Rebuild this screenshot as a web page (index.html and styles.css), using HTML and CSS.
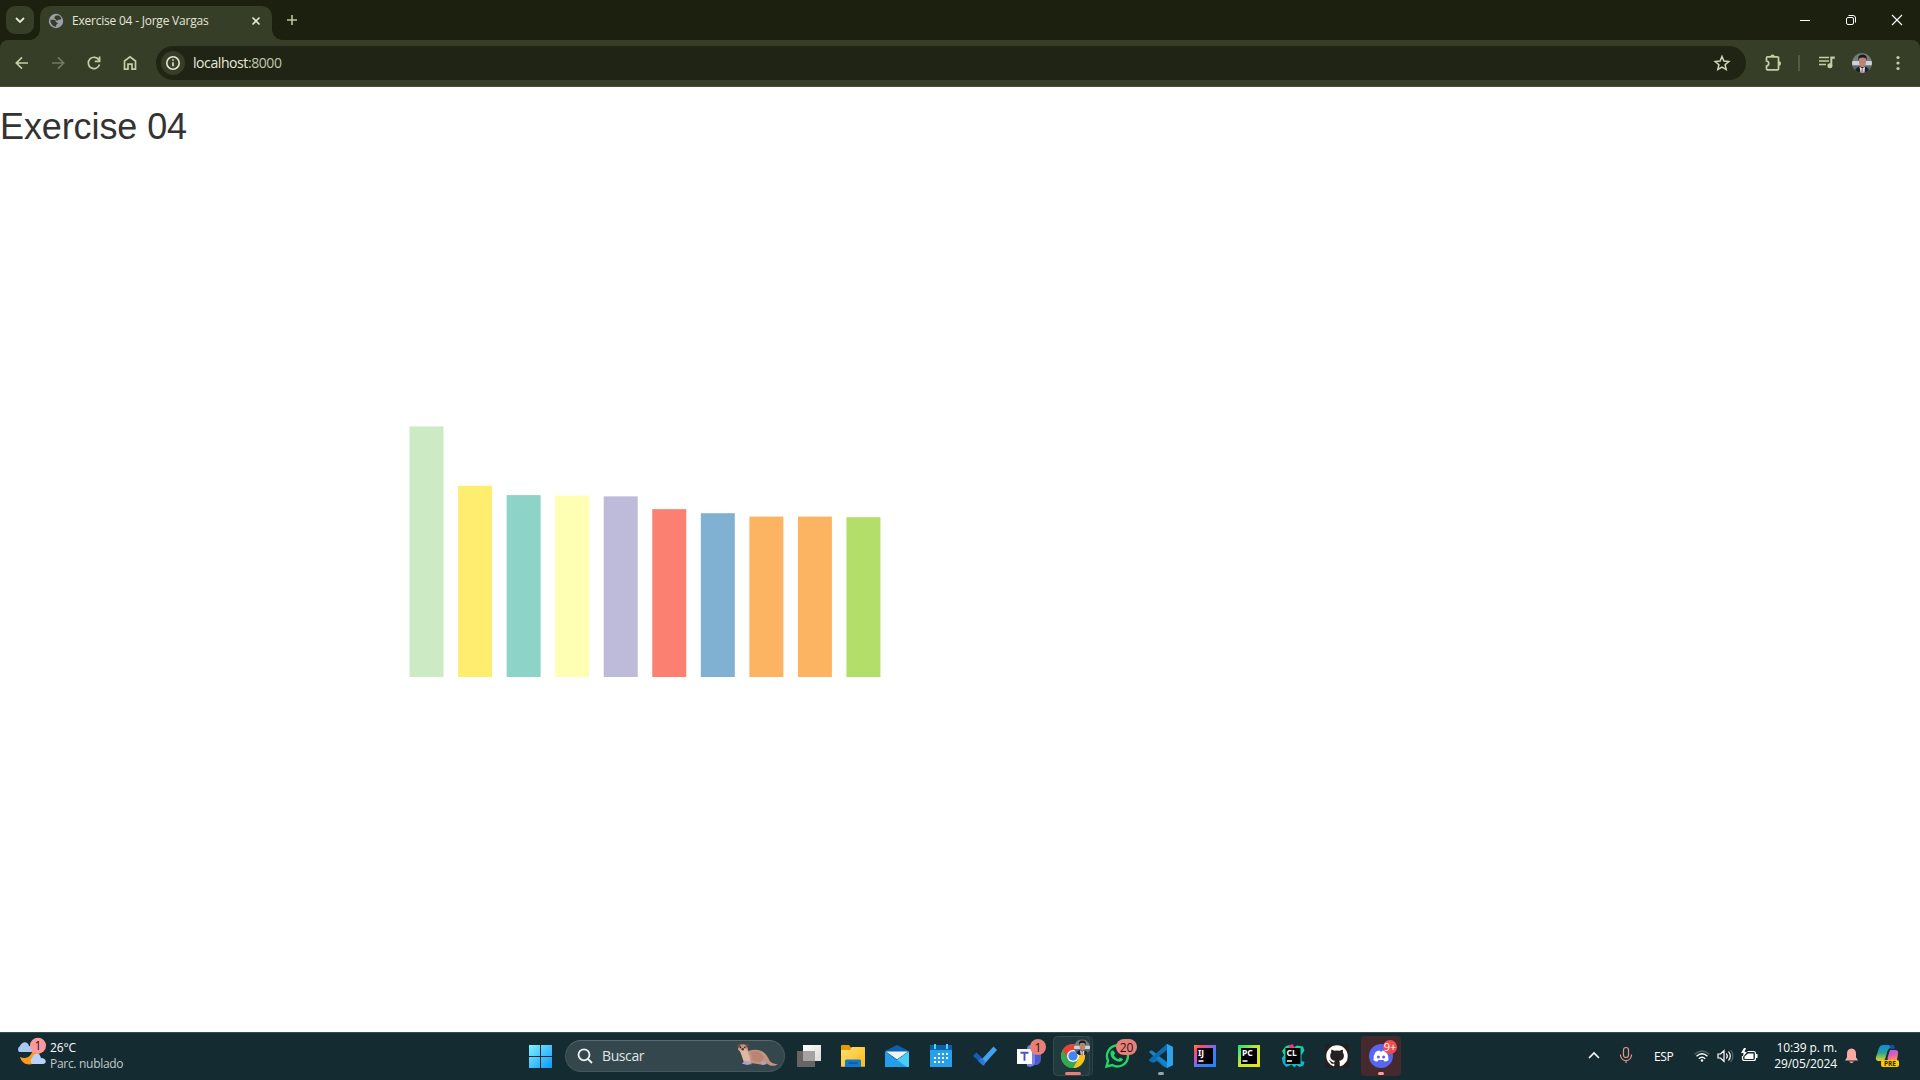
FILE: index.html
```html
<!DOCTYPE html>
<html lang="es">
<head>
<meta charset="utf-8">
<title>Exercise 04 - Jorge Vargas</title>
<link rel="stylesheet" href="styles.css">
</head>
<body>
<div class="screen">
  <header class="tabstrip">
    <div class="tab-search"><svg width="28" height="28"><path d="M10 12l4 4 4-4" fill="none" stroke="#e3e6d8" stroke-width="1.8"/></svg></div>
    <div class="tab">
      <svg class="globe" width="16" height="16" viewBox="0 0 16 16"><circle cx="8" cy="8" r="7.200" fill="#9aa0a6"/><path d="M2.500 6.800h3.200c1.600 0 2 1 2 1.600 0 1.200 2.100.8 2.100 2 0 .9-1.700.7-1.700 1.800v1.500C5 13.800 2 10.500 2.500 6.800zM8 2.500h2.500c1.500.7 2.500 1.700 2.900 3.200-1 1-1.600 1.300-2.600 1-.9-.3-.8 1.200-2.200.9-1-.3-.3-1.400-1.500-1.700-1.400-.3-.5-2.500.9-3.400z" fill="#373e28"/></svg>
      <span class="tab-title">Exercise 04 - Jorge Vargas</span>
      <svg width="16" height="16"><path d="M4.500 4.500l7 7m0-7l-7 7" stroke="#e3e6d8" stroke-width="1.600"/></svg>
    </div>
    <svg class="new-tab" width="20" height="20"><path d="M10 5v10M5 10h10" stroke="#bcc5a5" stroke-width="1.600"/></svg>
    <div class="window-buttons">
      <svg width="46" height="40"><path d="M18 20.500h10" stroke="#fff"/></svg>
      <svg width="46" height="40" fill="none" stroke="#fff"><rect x="18.500" y="17.500" width="7" height="7" rx="1.500"/><path d="M20.500 15.500h4.500q2.500 0 2.500 2.500v4.500"/></svg>
      <svg width="46" height="40"><path d="M18 15l10 10m0-10l-10 10" stroke="#fff" stroke-width="1.100"/></svg>
    </div>
  </header>
  <div class="toolbar-wrap">
  <nav class="toolbar">
    <div class="nav-buttons">
      <svg width="36" height="36" fill="none" stroke="#c5cda9" stroke-width="1.700"><path d="M24 18H12.500M18 12.300L12.300 18l5.700 5.700"/></svg>
      <svg width="36" height="36" fill="none" stroke="#737961" stroke-width="1.700"><path d="M12 18h11.500M18 12.300l5.700 5.700-5.700 5.700"/></svg>
      <svg width="36" height="36" fill="none" stroke="#c5cda9" stroke-width="1.700"><path d="M23 15.200A5.700 5.700 0 1 0 23.500 19.500M23.600 11.500v4.800h-4.800"/></svg>
      <svg width="36" height="36" fill="none" stroke="#c5cda9" stroke-width="1.700"><path d="M12.500 24.200V16L18 11.800 23.500 16v8.200H20v-5h-4v5z"/></svg>
    </div>
    <div class="address">
      <span class="site-info"><svg width="24" height="24" fill="none" stroke="#e3e6d8" stroke-width="1.600"><circle cx="12" cy="12" r="6.200"/><path d="M12 11.200v4M12 8.200v1.600"/></svg></span>
      <span class="url">localhost<span class="port">:8000</span></span>
      <svg class="star" width="18" height="18" fill="none" stroke="#d0d6ba" stroke-width="1.500"><path d="M9 2.500l1.900 4.600 4.900.4-3.700 3.200 1.100 4.800L9 13l-4.200 2.500 1.100-4.800-3.700-3.200 4.900-.4z"/></svg>
    </div>
    <div class="tool-icons">
      <svg width="20" height="20" fill="none" stroke="#c5cda9" stroke-width="1.700"><path d="M4.500 3.800h10q1 0 1 1v11q0 1-1 1h-10q-1 0-1-1V13c3-.5 3-4.500 0-5V4.800q0-1 1-1z"/><path d="M8.200 3.500a1.300 1.100 0 0 1 2.600 0M16 9a1.200 1.500 0 0 1 0 3" fill="#c5cda9"/></svg>
      <span class="divider"></span>
      <svg class="media" width="18" height="16"><path d="M1 2.500h10M1 6h10M1 9.500h7" stroke="#c5cda9" stroke-width="1.600"/><path d="M12.300 1.500H16.800v2.200h-2.500v7h-2z" fill="#c5cda9"/><circle cx="11.900" cy="10.800" r="2.500" fill="#c5cda9"/></svg>
      <svg class="profile" width="20" height="20" viewBox="0 0 20 20"><use href="#avatar"/></svg>
      <svg class="menu" width="6" height="16" fill="#c5cda9"><circle cx="3" cy="2.500" r="1.600"/><circle cx="3" cy="8" r="1.600"/><circle cx="3" cy="13.500" r="1.600"/></svg>
    </div>
  </nav>
  </div>
  <main class="page">
    <h1>Exercise 04</h1>
    <svg class="chart" width="500" height="260" viewBox="0 0 500 260">
      <g transform="translate(14.56 0)">
        <rect x="0" y="9.400" width="33.980" height="250.600" fill="#ccebc5"/>
        <rect x="48.540" y="68.750" width="33.980" height="191.250" fill="#ffed6f"/>
        <rect x="97.090" y="78.100" width="33.980" height="181.900" fill="#8dd3c7"/>
        <rect x="145.630" y="78.700" width="33.980" height="181.300" fill="#ffffb3"/>
        <rect x="194.170" y="79.400" width="33.980" height="180.600" fill="#bebada"/>
        <rect x="242.720" y="92.150" width="33.980" height="167.850" fill="#fb8072"/>
        <rect x="291.260" y="96.200" width="33.980" height="163.800" fill="#80b1d3"/>
        <rect x="339.810" y="99.600" width="33.980" height="160.400" fill="#fdb462"/>
        <rect x="388.350" y="99.600" width="33.980" height="160.400" fill="#fdb462"/>
        <rect x="436.890" y="100.200" width="33.980" height="159.800" fill="#b3de69"/>
      </g>
    </svg>
  </main>
  <footer class="taskbar">
    <div class="weather">
      <svg width="32" height="40"><path d="M5 25c7 3 12-1 13-9 6 2 9 7 4 13-6 6-15 4-17-4z" fill="#fb9a1c"/><path d="M18 16l4-5 5 6-2 3z" fill="#fdc43c"/><path d="M4 20a4 4 0 0 1 1-6c2-5 8-5 9 0 6 0 6 6 2 6z" fill="#a9c9f5"/><path d="M17 32a4 4 0 0 1 0-6c2-6 8-5 9 0 6 0 6 6 2 6z" fill="#b9d2fa"/><circle cx="23" cy="13.700" r="8" fill="#ff99a0"/><text x="23" y="18.300" class="badge-text">1</text></svg>
      <div class="weather-text"><span class="degrees">26°C</span><span class="muted">Parc. nublado</span></div>
    </div>
    <div class="apps">
      <svg class="start" width="50" height="48"><defs><linearGradient id="win" x1="14" y1="13" x2="37" y2="36" gradientUnits="userSpaceOnUse"><stop stop-color="#7cf3ff"/><stop offset="1" stop-color="#0f96fb"/></linearGradient></defs><path d="M14 13h11v11H14zM26 13h11v11H26zM14 25h11v11H14zM26 25h11v11H26z" fill="url(#win)"/></svg>
      <div class="search">
        <svg width="16" height="16" fill="none" stroke="#eef2f2" stroke-width="1.800"><circle cx="7" cy="6.800" r="5.500"/><path d="M11 11l4 4"/></svg>
        <span>Buscar</span>
        <svg class="otter" width="44" height="28" viewBox="0 0 44 28"><path d="M4 3.500Q8 1 13 3.500L14.500 9c6-2 12-1.500 16 2 4 3.500 4 7.500 7 9.500 2 1.300 4 1.200 6 1.700-3 2.600-8 1.800-11-1L30 23l-13-2-9 1 2-3-3-9-3-2z" fill="#c39380"/><path d="M5.500 7.500l7-.5 3 7 1 6-7-1z" fill="#dfb8a4"/><path d="M17 10c6-2 11 0 13 6l-3 4-8-1z" fill="#b98471"/><path d="M3 3l2.500-1L7 4 4.500 6zM11.500 2l3 .3-.3 3-2 0z" fill="#76483f"/><circle cx="6.500" cy="5.500" r=".8" fill="#202020"/><circle cx="10.800" cy="5.300" r=".8" fill="#202020"/><circle cx="8.700" cy="7.300" r="1.200" fill="#51312c"/><path d="M8 21.500l4-2.500 4 1 2 2-5 1zM26 20l4-1 3 3-5 1z" fill="#aea1cb"/></svg>
      </div>
      <svg class="app first"><defs><linearGradient id="tv" x2="1" y2="1"><stop stop-color="#fff"/><stop offset="1" stop-color="#dadada"/></linearGradient></defs><path d="M10 19h18v16H10z" fill="#686463"/><path d="M16 13h18v16H16z" fill="url(#tv)"/><path d="M16 19h12v10H16z" fill="#a5a3a2"/></svg>
      <svg class="app"><defs><linearGradient id="fo" x2="1" y2="1"><stop stop-color="#ffe071"/><stop offset="1" stop-color="#fcb918"/></linearGradient></defs><path d="M10 14q0-1 1-1h7l2 2.500h14V25H10z" fill="#e19c03"/><path d="M10 18h9l2-3h12q1 0 1 1v18.700H10z" fill="url(#fo)"/><path d="M14 35v-6q0-1.500 1.500-1.500h13q1.500 0 1.500 1.500v6z" fill="#1278cc"/><path d="M17.500 31h9" stroke="#0a4e8d" stroke-width="1.200"/></svg>
      <svg class="app"><path d="M10 19l12-6 12 6v5H10z" fill="#0a62ad"/><path d="M11 19.500h22l-11 8z" fill="#f2f2f2"/><path d="M10 19.500L22 28l12-8.500V35H10z" fill="#239eea"/><path d="M34 19.500L22 28l10 7h2z" fill="#48cff5"/></svg>
      <svg class="app"><path d="M11 18h22v17H11z" fill="#26a0e8"/><path d="M11 13h22v5H11z" fill="#0a62ad"/><path d="M15 12h2v5h-2zM27 12h2v5h-2z" fill="#4fd2f8"/><path d="M19 22h10M15 26h14M15 30h10" stroke="#fff" stroke-width="2" stroke-dasharray="2 2"/></svg>
      <svg class="app"><path d="M10 24l3.500-3.500 8.500 8.500-.5 5z" fill="#185abd"/><path d="M19 27L30.500 14.500 34 18 20 33.500 16.500 30z" fill="#43a1f0"/><path d="M15 29l3-3 4 3-1.500 4.500z" fill="#2b78d4"/></svg>
      <svg class="app"><circle cx="24" cy="17" r="4" fill="#7b83eb"/><path d="M19 21h15v7q-1 6-7 5-2 3-7 1z" fill="#5059c9"/><path d="M18 21h10v10q-2 5-8 3z" fill="#7b83eb"/><path d="M10 17h15v15H10z" fill="#fff"/><path d="M13.500 20.800h8M17.500 20.800v8" stroke="#4b53bc" stroke-width="1.900"/><circle cx="31" cy="15" r="8" fill="#e88078"/><text x="31" y="19.500" class="badge-text">1</text></svg>
      <svg class="app"><rect x="4.500" y="4.500" width="37" height="39" rx="4" fill="#1a3338" stroke="#2e454a"/><rect x="2.500" y="4.500" width="36" height="39" rx="4" fill="#22393e" stroke="#344b50"/><circle cx="22" cy="24" r="12" fill="#35a853"/><path d="M11.600 18A12 12 0 0 1 32.400 18H22v6l-5.200 3z" fill="#e94235"/><path d="M32.400 18A12 12 0 0 1 22 36l5.200-9L22 18z" fill="#fbc116"/><path d="M22 36l5.200-9H16.800L11.600 18A12 12 0 0 0 22 36z" fill="#35a853"/><circle cx="22" cy="24" r="6" fill="#fff"/><circle cx="22" cy="24" r="4.700" fill="#4285f4"/><svg x="23" y="7.300" width="16" height="16" viewBox="0 0 20 20"><use href="#avatar"/></svg><rect x="14" y="40" width="16" height="3" rx="1.500" fill="#ea7f78"/></svg>
      <svg class="app"><path d="M11.500 34.500l1.600-5.900A10.500 10.500 0 1 1 17.200 33z" fill="none" stroke="#25d366" stroke-width="2.400"/><path d="M18.500 18.500l1.600 3-1.200 1.700c1 2 2.500 3.200 4.500 4l1.500-1.600 3 1.500c0 5-12.500 2.500-12.500-6 0-1.600 1.200-3 3.100-2.600z" fill="#25d366"/><rect x="21" y="7" width="21" height="16" rx="8" fill="#e88078"/><text x="31.500" y="19.500" class="badge-text">20</text></svg>
      <svg class="app"><path d="M28 12l6 3v18l-6 3-17-15.500 2-2 17 12z" fill="#1682cb"/><path d="M28 12v24L11 29.500l-1-1.700 18-16z" fill="#0f70b5"/><path d="M10 20l2-1.700L28 30v6z" fill="#1683cf"/><path d="M10 28l18-16v6L12 29.700z" fill="#0b6dae"/><path d="M28 12l6 3v18l-6 3z" fill="#2ba4ee"/><path d="M28 18v12l-8-6z" fill="#132b31"/><path d="M14 21l4 3-4 3-4-3zM14 17l-5 5v4l5 5 0-3.500-2.500-3.500L14 20zM15 10h13v2L16 22.500 12 19zM12 29l4-3.500L28 36v2H15z" fill="none"/><path d="M9 21l3.500 3L9 27z" fill="#132b31"/><path d="M22 12l5-1-9 8-4-2zM14 31l4-2 9 8-5-1z" fill="#132b31"/><rect x="19" y="40" width="6" height="3" rx="1.500" fill="#9aa5a8"/></svg>
      <svg class="app"><defs><linearGradient id="ij" x2="1" y2="1"><stop stop-color="#ff8a3d"/><stop offset=".18" stop-color="#fe4a6b"/><stop offset=".42" stop-color="#a35fd6"/><stop offset=".6" stop-color="#3f7df5"/><stop offset="1" stop-color="#1c86fa"/></linearGradient><linearGradient id="iji" x2="1" y2=".3"><stop stop-color="#1c0920"/><stop offset="1"/></linearGradient></defs><path d="M11 13h22v22H11z" fill="url(#ij)"/><path d="M14 16h16v16H14z" fill="url(#iji)"/><text x="15" y="24.300" class="ide">IJ</text><path d="M15.500 29h5" stroke="#fff" stroke-width="1.500"/></svg>
      <svg class="app"><defs><linearGradient id="pc" x2="1" y2="1"><stop stop-color="#21d789"/><stop offset=".2" stop-color="#5fe35c"/><stop offset=".48" stop-color="#c5e82f"/><stop offset="1" stop-color="#e9e51c"/></linearGradient></defs><path d="M11 13h22v22H11z" fill="url(#pc)"/><path d="M14 16h16v16H14z"/><text x="15" y="24.300" class="ide">PC</text><path d="M15.500 29h5" stroke="#fff" stroke-width="1.500"/></svg>
      <svg class="app"><defs><linearGradient id="cl" x2="1" y2="1"><stop stop-color="#21d789"/><stop offset=".4" stop-color="#1fd196"/><stop offset="1" stop-color="#0eaedb"/></linearGradient></defs><path d="M15 14l4-1 3 3 4-2.500 6 1 1.500 4-3 4.500v6l3 1-1 3.500-4 1.500-3-2-2 2.500-3-3-4 2-4-2.500-1.500-5 2-4-2-4z" fill="url(#cl)"/><path d="M11 25l3 1v6l5 1-4 2-3-4z" fill="#0faddc"/><path d="M18 13.500l3.500-1.500 2.500 4h-6z" fill="#ed358c"/><path d="M14.500 16h15v16h-15z"/><text x="15.500" y="24.300" class="ide">CL</text><path d="M16 29h5" stroke="#fff" stroke-width="1.500"/></svg>
      <svg class="app"><path d="M10 12h24v24H10z" fill="#24201f"/><path transform="translate(11.300 13.300) scale(1.340)" fill="#fff" d="M8 0C3.580 0 0 3.580 0 8c0 3.540 2.290 6.530 5.470 7.590.4.070.55-.17.55-.38v-1.490c-2.010.37-2.530-.49-2.690-.94-.09-.23-.48-.94-.82-1.130-.28-.15-.68-.52-.01-.53.63-.01 1.080.58 1.230.82.72 1.210 1.870.87 2.330.66.070-.52.280-.87.510-1.070-1.780-.2-3.640-.89-3.640-3.950 0-.87.310-1.590.82-2.150-.08-.2-.36-1.020.08-2.120 0 0 .67-.21 2.200.82a7.400 7.400 0 0 1 4 0c1.530-1.040 2.200-.82 2.200-.82.440 1.100.160 1.920.080 2.120.510.560.820 1.270.820 2.150 0 3.070-1.870 3.750-3.650 3.950.290.250.540.730.540 1.480v2.200c0 .210.150.460.550.380A8 8 0 0 0 16 8c0-4.420-3.580-8-8-8z"/></svg>
      <svg class="app"><rect x="2" y="4" width="40" height="40" rx="4" fill="#46292c"/><circle cx="22" cy="24" r="12" fill="#5865f2"/><path d="M16.500 20q2-1.600 4-1.500l.5 1h2l.5-1q2-.1 4 1.500 2.200 3.500 2 8-2 1.700-4 1.500l-1-1.500h-5l-1 1.500q-2 .2-4-1.500-.2-4.500 2-8z" fill="#fff"/><circle cx="19.400" cy="25" r="1.500" fill="#5865f2"/><circle cx="24.600" cy="25" r="1.500" fill="#5865f2"/><circle cx="31" cy="15" r="7" fill="#ee4e50"/><text x="31" y="19" class="badge-text light">9+</text><rect x="19" y="40" width="6" height="3" rx="1.500" fill="#ff9da0"/></svg>
    </div>
    <div class="tray">
      <svg class="chevron" width="12" height="16" fill="none" stroke="#fff" stroke-width="1.600"><path d="M1 10l5-5 5 5"/></svg>
      <svg class="mic" width="14" height="20" fill="none" stroke="#e5968e" stroke-width="1.200"><rect x="4.500" y="1.500" width="5" height="10" rx="2.500"/><path d="M1.500 8.500v1q1 5 5.500 5t5.500-5v-1M7 14.500V17"/></svg>
      <span class="language">ESP</span>
      <svg class="wifi" width="16" height="16" fill="none" stroke="#fff" stroke-width="1.400"><path d="M.7 6.300Q8-.5 15.300 6.300" stroke="#53676b"/><path d="M2.500 8.300q5.500-5 11 0M4.800 10.700q3.200-3 6.400 0"/><circle cx="8" cy="12.500" r="1.200" fill="#fff" stroke="none"/></svg>
      <svg class="volume" width="17" height="16" fill="none" stroke="#fff" stroke-width="1.200"><path d="M1 6h2.500L7 2.700v10.600L3.500 10H1zM9.300 5.500q2 2.500 0 5M11.500 3.500q3.600 4.500 0 9"/><path d="M13.700 2q4.500 6 0 12" stroke="#53676b"/></svg>
      <svg class="battery" width="17" height="16"><path d="M6.500 3.500h6q2 0 2 2v5q0 2-2 2h-9q-2 0-2-2V8" fill="none" stroke="#fff" stroke-width="1.200"/><path d="M7 5.500h5.500V11h-9V8.500zM15 6h1.500v4H15zM3 0L0 5h2.500L2 9l4-5H3.500L5 0z" fill="#fff"/></svg>
      <div class="clock"><span class="time">10:39 p. m.</span><span>29/05/2024</span></div>
      <svg class="bell" width="15" height="18" fill="#fbaaa2"><path d="M3 6.500Q3 2 7.500 1.500 12 2 12 6.500v3.700l2 3.300H1l2-3.300zM5 14.500h5q-2.500 3-5 0z"/></svg>
      <svg class="copilot" width="26" height="26"><defs><linearGradient id="cp" x2="0" y2="1"><stop stop-color="#1286e8"/><stop offset=".5" stop-color="#2aa68b"/><stop offset="1" stop-color="#f4d222"/></linearGradient><linearGradient id="cq" x2=".3" y2="1"><stop stop-color="#9b68ef"/><stop offset=".6" stop-color="#e45dae"/><stop offset="1" stop-color="#ff8861"/></linearGradient></defs><path d="M8 2h9q2 0 2.500 3h-4q-2 0-3 3l-2 7q-1 3-4 3H4q-4 0-3-4L4 5q1-3 4-3z" fill="url(#cp)"/><path d="M15 7h5q4 0 3 4l-1 6h-9q-1 0 0-4z" fill="url(#cq)"/><path d="M14 2h3q2 0 2.500 4H16z" fill="#154ca8"/><rect x="6" y="17" width="18" height="7" rx="2" fill="#ffc908"/><text x="15" y="23" class="pre">PRE</text></svg>
    </div>
  </footer>
</div>
<svg class="symbols" width="0" height="0"><defs><clipPath id="round"><circle cx="10" cy="10" r="10"/></clipPath><symbol id="avatar" viewBox="0 0 20 20"><g clip-path="url(#round)"><path d="M0 0h20v20H0z" fill="#737c80"/><path d="M0 8h20v4.500H0z" fill="#cfd2d2"/><path d="M0 12.500h20V20H0z" fill="#5d6669"/><path d="M2.500 20q0-5 5-6.500h5q5 1 5 6.500z" fill="#1b2028"/><path d="M7.500 13.500l2.800 2 2.700-2-.5 6.500h-4z" fill="#d9dce3"/><path d="M9.700 15.500h1.200l.6 4.500H9z" fill="#a9808a"/><path d="M7 5q3-2.500 7 0v4.500q-.5 4.500-3.500 4.800Q7.500 14 7 9.500z" fill="#b98572"/><path d="M6.500 8Q5 1.300 10.500 1.400 16 1.300 14.500 8L13.800 5.200Q10.500 3.600 7.300 5.200z" fill="#1d1918"/></g></symbol></defs></svg>
</body>
</html>
```
FILE: styles.css
```css
* { box-sizing: border-box; }
body { margin: 0; overflow: hidden; background: #fff; font-family: "Open Sans", "Noto Sans", sans-serif; font-size: 12px; }
svg { display: block; flex: none; }
.screen { width: 1920px; height: 1080px; display: flex; flex-direction: column; }
.symbols { position: absolute; }

.tabstrip { height: 40px; flex: none; display: flex; background: #1b200f; }
.tab-search { width: 28px; height: 28px; margin: 6px 6px 0; border-radius: 9px; background: #373e28; }
.tab { position: relative; width: 232px; height: 34px; margin-top: 6px; padding: 0 8px 5px 8px; display: flex; align-items: center; background: #373e28; border-radius: 10px 10px 0 0; }
.tab::before, .tab::after { content: ""; position: absolute; bottom: 0; width: 10px; height: 10px; }
.tab::before { left: -10px; background: radial-gradient(circle at 0 0, transparent 9.5px, #373e28 10px); }
.tab::after { right: -10px; background: radial-gradient(circle at 100% 0, transparent 9.5px, #373e28 10px); }
.tab-title { flex: 1; margin-left: 8px; color: #e3e6d8; letter-spacing: -0.22px; white-space: nowrap; }
.new-tab { margin: 10px 0 0 10px; }
.window-buttons { margin-left: auto; display: flex; }

.toolbar-wrap { flex: none; background: #1b200f; }
.toolbar { height: 47px; display: flex; align-items: center; padding: 0 0 1px 4px; border-radius: 8px 8px 0 0; background: linear-gradient(#373e28 46px, #4b5140 46px); }
.nav-buttons { display: flex; width: 152px; }
.nav-buttons svg { width: 36px; }
.address { width: 1590px; height: 34px; padding: 0 15px 0 5px; border-radius: 17px; background: #1f2414; display: flex; align-items: center; }
.site-info { width: 24px; height: 24px; border-radius: 50%; background: #373e28; }
.url { margin-left: 8px; padding-bottom: 1px; font-size: 14px; letter-spacing: -0.42px; color: #e7eadb; }
.port { color: #c2c8b0; }
.star { margin-left: auto; }
.tool-icons { display: flex; align-items: center; }
.tool-icons > :first-child { margin-left: 17px; }
.divider { width: 2px; height: 16px; margin-left: 15px; background: #545c41; }
.media { margin-left: 18px; }
.profile { margin-left: 16px; }
.menu { margin-left: 23px; }

.page { flex: 1; padding-top: 20px; }
h1 { margin: 0; font: 400 36px/40px "Liberation Sans", Arial, sans-serif; letter-spacing: -0.1px; color: #333; }
.chart { margin: 270px 0 0 395px; }

.taskbar { height: 48px; flex: none; display: flex; color: #fff; background: #132b31; box-shadow: inset 0 1px #364a4f; }
.weather { width: 515px; padding-left: 15px; display: flex; }
.weather-text { margin-left: 3px; padding-top: 8px; display: flex; flex-direction: column; line-height: 16px; letter-spacing: -0.3px; }
.degrees { letter-spacing: -0.1px; }
.muted { color: #c2cacb; }
.apps { display: flex; }
.app { width: 44px; height: 48px; }
.first { margin-left: 2px; }
.search { width: 220px; height: 32px; margin-top: 8px; padding: 0 6px 0 11px; border: 1px solid #43565b; border-top-color: #58696d; border-radius: 16px; background: #33474c; display: flex; align-items: center; color: #dfe5e6; font-size: 14px; letter-spacing: -0.4px; }
.search svg { margin-top: -1px; }
.search span { margin-left: 9px; padding-bottom: 1px; }
.search .otter { margin: 0 0 0 auto; }
.badge-text { font-size: 12px; text-anchor: middle; fill: #241417; }
.light { font-size: 11px; fill: #fff; }
.ide { font: bold 8.5px "Noto Sans", sans-serif; fill: #fff; }
.pre { font: bold 6.5px "Open Sans", sans-serif; text-anchor: middle; fill: #2c2400; }

.tray { margin-left: auto; width: 332px; display: flex; align-items: center; }
.mic { margin-left: 19px; }
.language { margin-left: 21px; width: 20px; letter-spacing: -0.4px; }
.wifi { margin-left: 20px; }
.volume { margin-left: 7px; }
.battery { margin-left: 7px; }
.clock { width: 79px; display: flex; flex-direction: column; text-align: right; line-height: 16px; letter-spacing: -0.1px; padding-bottom: 1px; }
.bell { margin-left: 7px; }
.copilot { margin-left: 16px; }
```
